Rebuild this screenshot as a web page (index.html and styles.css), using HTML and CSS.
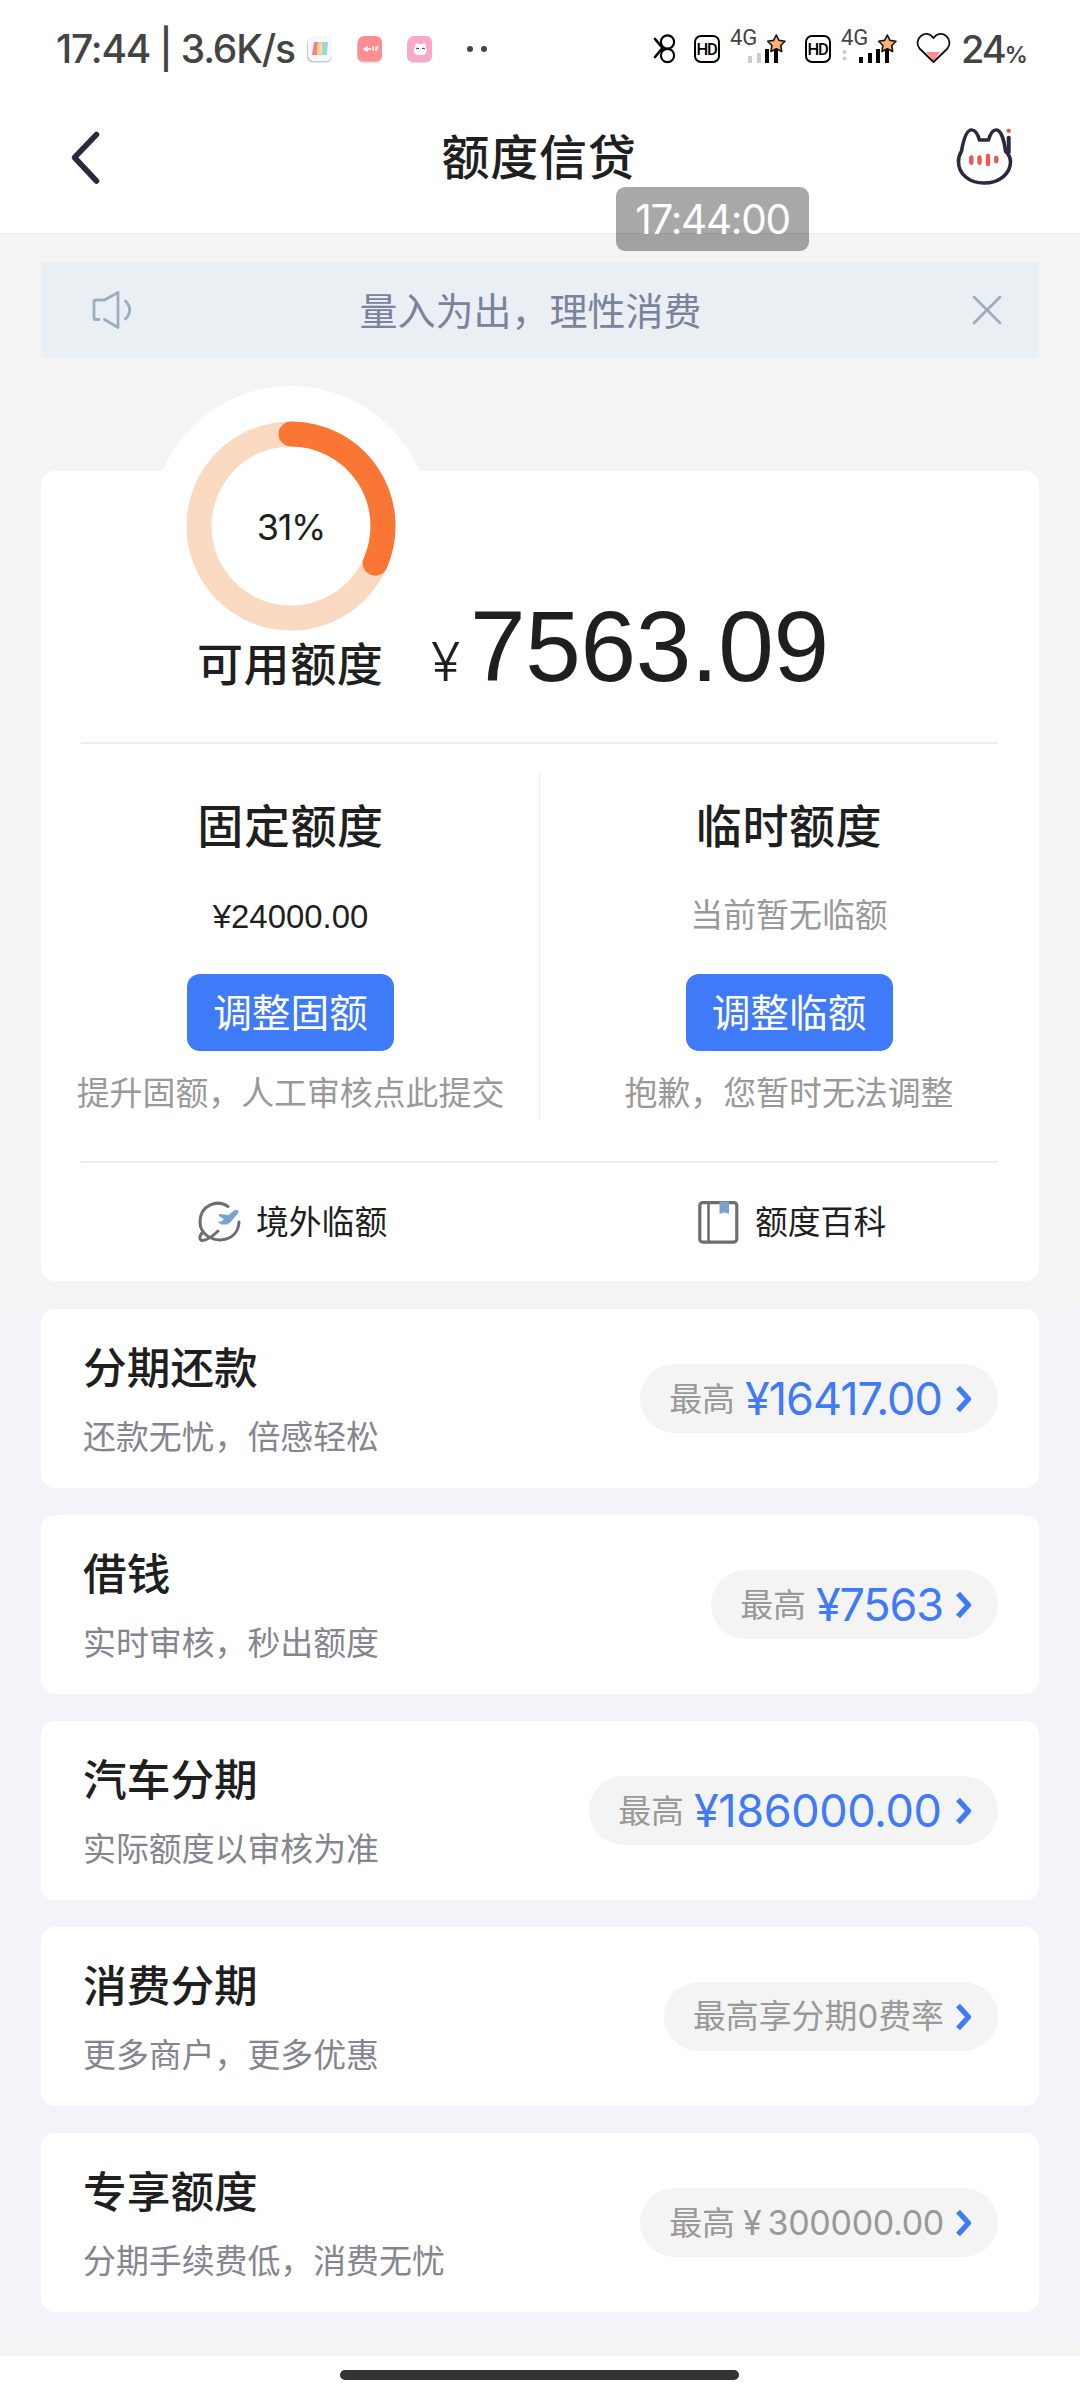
FILE: index.html
```html
<!DOCTYPE html>
<html lang="zh-CN">
<head>
<meta charset="utf-8">
<title>额度信贷</title>
<link rel="stylesheet" href="styles.css">
</head>
<body>
<div class="screen">
  <div class="status">
    <span class="status-time">17:44 | 3.6K/s</span>
    <svg class="status-apps" width="190" height="36" viewBox="302 33 190 36">
      <rect x="307" y="39.5" width="25" height="25" rx="6" fill="#c9c9cf"/>
      <rect x="308" y="38" width="24" height="25" rx="6" fill="#f8f8fc"/>
      <path d="M314 44h4l-1 13h-5z" fill="#f38286"/><path d="M318 44h4l-1 6 1 7h-5z" fill="#f8cf88"/><path d="M322 44h6l-1 13h-5z" fill="#97dad3"/>
      <rect x="357" y="39.5" width="25" height="25" rx="6" fill="#dcb9bb"/>
      <rect x="358" y="38" width="24" height="25" rx="6" fill="#ff8d91"/>
      <path d="M364 51l3-2v4zM368 51h3M373 48v5M376 49v4M378 48l-2 5" stroke="#fff" stroke-width="1.4" fill="#fff"/>
      <rect x="407" y="39.5" width="25" height="25" rx="6" fill="#dcbac8"/>
      <rect x="408" y="38" width="24" height="25" rx="6" fill="#ffa6c9"/>
      <path d="M415 48l1-3 3 1h3l3-1 1 3q2 8-3 9h-6q-5-1-2-9z" fill="#fff"/>
      <path d="M416 51l2-1 1 1M422 51l1-1 2 1" fill="none" stroke="#333" stroke-width="1"/>
      <circle cx="470" cy="51" r="3" fill="#444"/><circle cx="484" cy="51" r="3" fill="#444"/>
    </svg>
    <div class="status-right">
      <svg class="bt" width="24" height="34" viewBox="652 34 24 34" fill="none" stroke="#000" stroke-width="2.2" stroke-linecap="round">
        <circle cx="667.500" cy="44" r="6.600"/><circle cx="667.500" cy="57.500" r="6.600"/><path d="M655 41l7.500 9-7.500 9" stroke-width="2.600"/>
      </svg>
      <span class="hd">HD</span>
      <div class="net net-a">
        <span class="net-type">4G</span>
        <svg class="bars" width="58" height="36" viewBox="729 32 58 36">
          <path d="M748 58h4v7h-4zM757 55h4v10h-4z" fill="#ccc"/><path d="M765 51h4v14h-4zM774 51h4v14h-4z"/>
          <path d="M776.300 37l2.700 5.400 6 .9-4.300 4.200 1 6-5.400-2.800-5.400 2.800 1-6-4.300-4.200 6-.9z" fill="#ffb273" stroke="#151515" stroke-width="1.600" stroke-linejoin="round"/>
        </svg>
      </div>
      <span class="hd">HD</span>
      <div class="net net-b">
        <span class="net-type">4G</span>
        <svg class="bars" width="58" height="36" viewBox="840 32 58 36">
          <circle cx="844.500" cy="54" r="2" fill="#ccc"/><circle cx="844.500" cy="60.500" r="2" fill="#ccc"/>
          <path d="M859 59h4v6h-4zM868 55h4v10h-4zM876 51h4v14h-4zM885 51h4v14h-4z"/>
          <path d="M887.300 37l2.700 5.400 6 .9-4.300 4.200 1 6-5.400-2.800-5.400 2.800 1-6-4.300-4.200 6-.9z" fill="#ffb273" stroke="#151515" stroke-width="1.600" stroke-linejoin="round"/>
        </svg>
      </div>
      <svg class="heart" width="38" height="34" viewBox="914 33 38 34">
        <path d="M926 54h14l-6.500 9.500z" fill="#ff8d91"/>
        <path d="M933.500 64L919.500 50.500c-7-9 6-21 14-10.500 8-10.500 21 1.500 14 10.500z" fill="none" stroke="#111" stroke-width="1.800" stroke-linejoin="round"/>
      </svg>
      <span class="battery">24<span class="percent">%</span></span>
    </div>
  </div>

  <header class="header">
    <svg class="back" width="32" height="56" viewBox="70 133 32 56" fill="none" stroke="#2b2a3d" stroke-width="5.500" stroke-linecap="round" stroke-linejoin="round"><path d="M96.500 138.500L74.500 161.500 96.500 185"/></svg>
    <h1 class="title">额度信贷</h1>
    <svg class="cat" width="60" height="60" viewBox="954 130 60 62" preserveAspectRatio="none" fill="none" stroke-linecap="round" stroke-linejoin="round">
      <path d="M961.500 156C963 147 966 134 971.500 134c4.500 0 6.500 5 8 10.500h9c1.500-5.500 3.500-10.500 7.500-10.500 5.500 0 8.500 13 9.500 22q5 5 5 11c0 12-11 22-26.500 22s-25.500-10-25.500-22q0-6 3-11z" stroke="#2b2a3d" stroke-width="3.600"/>
      <path d="M1008.700 142v15" stroke="#2b2a3d" stroke-width="4"/>
      <circle cx="1008.700" cy="135" r="2.200" fill="#e8584f"/>
      <path d="M971.300 162.500v5.500M979.500 162.500v5.500M988 161v8.500M996.300 163v3.500" stroke="#e8584f" stroke-width="4.400"/>
    </svg>
    <div class="toast">17:44:00</div>
  </header>

  <main class="content">
    <div class="notice">
      <svg width="42" height="42" viewBox="0 0 42 42" fill="none" stroke="#9aaec1" stroke-width="2.800" stroke-linecap="round" stroke-linejoin="round">
        <path d="M7 30.500H3.500q-1.500 0-1.500-1.500V13q0-2 2-2h8.500L26 3.500v35L12.500 30.500M33.500 12q8.500 9 0 18"/>
      </svg>
      <p class="notice-text">量入为出，理性消费</p>
      <svg width="34" height="34" viewBox="0 0 34 34" fill="none" stroke="#9aaec1" stroke-width="2.800" stroke-linecap="round"><path d="M4 4l26 26M30 4L4 30"/></svg>
    </div>

    <section class="quota">
      <div class="dial">
        <svg class="ring" width="210" height="210" viewBox="0 0 210 210" fill="none" stroke-width="25">
          <circle cx="105" cy="105" r="92" stroke="#fad9c1"/>
          <path d="M105 13A92 92 0 0 1 189.200 142.100" stroke="#f97634" stroke-linecap="round"/>
        </svg>
        <span class="dial-value">31%</span>
      </div>
      <div class="available">
        <span class="available-label">可用额度</span>
        <span class="available-sign">¥</span>
        <span class="available-amount">7563.09</span>
      </div>
      <div class="limits">
        <div class="limit">
          <h2 class="limit-title">固定额度</h2>
          <p class="limit-amount">¥24000.00</p>
          <button class="adjust">调整固额</button>
          <p class="limit-tip">提升固额，人工审核点此提交</p>
        </div>
        <div class="limit">
          <h2 class="limit-title">临时额度</h2>
          <p class="limit-none">当前暂无临额</p>
          <button class="adjust">调整临额</button>
          <p class="limit-tip">抱歉，您暂时无法调整</p>
        </div>
      </div>
      <div class="links">
        <div class="link">
          <svg width="46" height="46" viewBox="0 0 46 46" fill="none" stroke="#6e6e6e" stroke-width="3" stroke-linecap="round" stroke-linejoin="round">
            <path d="M32 7.500C21 0 4 6 4 23c0 5 2 9 5 12 9 10 33 8 34-12M22 32q-10 10-16.500 9.500-4-2 1.500-9"/>
            <path d="M41.500 11.500q-2-1-4 1l-5 4-9-1v1.500l5 3-3 3h-3l3 2h6q4-3 6-6l4-5q1-1.500 0-2.500z" fill="#7aa2d0" stroke="#7aa2d0" stroke-width="1"/>
          </svg>
          <span>境外临额</span>
        </div>
        <div class="link">
          <svg width="46" height="46" viewBox="0 0 46 46" fill="none" stroke="#6e6e6e" stroke-width="3.200">
            <rect x="4.800" y="3.600" width="37" height="39.500" rx="3"/><path d="M13.500 4v39" stroke-width="2.600"/>
            <path d="M24.500 2.500h9.500V15l-4.700-1.500L24.500 15z" fill="#7aa2d0" stroke="none"/>
          </svg>
          <span>额度百科</span>
        </div>
      </div>
    </section>
  </main>

  <section class="products">
    <article class="product">
      <div><h3 class="product-title">分期还款</h3><p class="product-desc">还款无忧，倍感轻松</p></div>
      <div class="pill"><span>最高</span><strong class="pill-amount a1">¥16417.00</strong><svg class="arrow" width="20" height="32" viewBox="0 0 20 32"><path d="M4 4.500L14.500 16 4 27.500"/></svg></div>
    </article>
    <article class="product">
      <div><h3 class="product-title">借钱</h3><p class="product-desc">实时审核，秒出额度</p></div>
      <div class="pill"><span>最高</span><strong class="pill-amount a2">¥7563</strong><svg class="arrow" width="20" height="32" viewBox="0 0 20 32"><path d="M4 4.500L14.500 16 4 27.500"/></svg></div>
    </article>
    <article class="product">
      <div><h3 class="product-title">汽车分期</h3><p class="product-desc">实际额度以审核为准</p></div>
      <div class="pill"><span>最高</span><strong class="pill-amount a3">¥186000.00</strong><svg class="arrow" width="20" height="32" viewBox="0 0 20 32"><path d="M4 4.500L14.500 16 4 27.500"/></svg></div>
    </article>
    <article class="product">
      <div><h3 class="product-title">消费分期</h3><p class="product-desc">更多商户，更多优惠</p></div>
      <div class="pill"><span>最高享分期<span class="zero">0</span>费率</span><svg class="arrow" width="20" height="32" viewBox="0 0 20 32"><path d="M4 4.500L14.500 16 4 27.500"/></svg></div>
    </article>
    <article class="product">
      <div><h3 class="product-title">专享额度</h3><p class="product-desc">分期手续费低，消费无忧</p></div>
      <div class="pill"><span>最高</span><span class="pill-plain"><span>¥</span><span>300000.00</span></span><svg class="arrow" width="20" height="32" viewBox="0 0 20 32"><path d="M4 4.500L14.500 16 4 27.500"/></svg></div>
    </article>
  </section>

  <footer class="home"><div class="home-bar"></div></footer>
</div>
</body>
</html>
```

FILE: styles.css
```css
* { box-sizing: border-box; margin: 0; padding: 0; }
body { background: #f4f4f4; font-family: "Noto Sans CJK SC", sans-serif; color: #1f1f1f; }
svg { display: block; flex: none; }
.screen { width: 1080px; height: 2400px; display: flex; flex-direction: column; overflow: hidden; }

.status { height: 100px; flex: none; background: #fff; display: flex; padding: 28px 55px 0 56px; color: #444; font-family: Inter, sans-serif; white-space: nowrap; }
.status-time { width: 246px; font-size: 39px; font-weight: 500; line-height: 41px; letter-spacing: -1.2px; }
.status-apps { margin-top: 3px; }
.status-right { display: flex; flex: 1; justify-content: flex-end; align-items: flex-start; }
.bt { margin-top: 4px; margin-right: 18px; }
.hd { width: 26px; height: 28px; margin-top: 7px; border: 2px solid #000; border-radius: 7px; color: #000; font: 500 16.5px/25px Roboto, sans-serif; text-align: center; letter-spacing: -1.2px; text-indent: -1px; }
.net { position: relative; width: 58px; margin-left: 9px; }
.net-a { margin-right: 18px; }
.net-b { margin-right: 16px; }
.net-type { position: absolute; left: 1px; top: -2px; font: 400 22px/24px Roboto, sans-serif; }
.bars { margin-top: 2px; }
.heart { margin-top: 3px; margin-right: 9px; }
.battery { font-size: 38px; line-height: 42px; font-weight: 500; width: 64px; letter-spacing: -2px; }
.percent { font-size: 23px; font-weight: 600; }

.header { height: 133px; flex: none; background: #fff; position: relative; display: flex; justify-content: space-between; padding: 0 66px 0 70px; box-shadow: 0 1px 0 #eaeaea; z-index: 1; }
.back { margin-top: 29px; }
.title { font-size: 48px; font-weight: 500; line-height: 72px; margin: 18px 0 0 22px; letter-spacing: 0.8px; }
.cat { margin-top: 26px; }
.toast { position: absolute; left: 616px; top: 87px; width: 193px; height: 64px; border-radius: 9px; background: rgba(0, 0, 0, 0.34); color: #fff; font: 400 40.5px/65px Inter, sans-serif; text-align: center; letter-spacing: -1.3px; }

.content { padding: 29px 41px 28px; flex: none; }
.notice { height: 96px; background: #eaeff4; display: flex; align-items: center; justify-content: space-between; padding: 0 35px 0 51px; }
.notice-text { font-size: 38px; line-height: 56px; color: #79839d; margin: -3px 43px 0 0; }

.quota { position: relative; margin-top: 113px; height: 810px; background: #fff; border-radius: 14px; padding: 0 41px 0 40px; }
.dial { position: absolute; left: 110px; top: -85px; width: 280px; height: 280px; border-radius: 50%; background: #fff; display: grid; place-items: center; }
.ring { grid-area: 1 / 1; }
.dial-value { grid-area: 1 / 1; font: 400 36px/44px Inter, sans-serif; letter-spacing: -1.3px; padding-top: 2px; }
.available { position: relative; height: 273px; border-bottom: 2px solid #eee; display: flex; align-items: baseline; padding: 125px 0 0 116px; white-space: nowrap; }
.available-label { font-size: 46px; font-weight: 500; line-height: 66px; width: 234px; letter-spacing: 0.6px; }
.available-sign { font-size: 54px; font-weight: 300; line-height: 66px; width: 39px; font-family: Inter, sans-serif; }
.available-amount { font: 400 100px/100px "Liberation Sans", sans-serif; letter-spacing: -0.4px; }

.limits { height: 419px; border-bottom: 2px solid #eee; display: grid; grid-template-columns: 459px 1fr; padding: 28px 0 41px; }
.limit { display: flex; flex-direction: column; align-items: center; white-space: nowrap; }
.limit:first-child { border-right: 1px solid #eee; padding-right: 39px; }
.limit:last-child { padding-left: 40px; }
.limit-title { font-size: 46px; font-weight: 500; line-height: 66px; margin-top: 18px; letter-spacing: 0.6px; }
.limit-amount, .limit-none { height: 48px; font-size: 32.9px; margin-top: 33px; }
.limit-amount { font-family: "Liberation Sans", sans-serif; line-height: 55px; }
.limit-none { color: #999; line-height: 48px; }
.adjust { width: 207px; height: 77px; flex: none; margin-top: 37px; padding-bottom: 5px; border: 0; border-radius: 13px; background: #3f7bf8; color: #fff; font: 400 38.7px/72px "Noto Sans CJK SC", sans-serif; }
.limit-tip { color: #999; font-size: 32.9px; line-height: 48px; margin-top: 16px; }
.links { height: 118px; display: grid; grid-template-columns: 499px 1fr; padding-left: 115px; }
.link { display: flex; align-items: center; gap: 14px; font-size: 32.8px; line-height: 48px; white-space: nowrap; }
.link span { margin-top: -5px; }

.products { height: 1030px; flex: none; background: #f2f4f9; padding: 0 41px; display: flex; flex-direction: column; gap: 27px; }
.product { height: 179px; background: #fff; border-radius: 14px; display: flex; align-items: center; justify-content: space-between; padding: 0 41px 0 42px; }
.product-title { font-size: 43.7px; font-weight: 500; line-height: 64px; margin-top: -6px; }
.product-desc { font-size: 32.9px; line-height: 48px; color: #85858f; margin-top: 14px; }
.pill { height: 69px; border-radius: 35px; background: #f4f4f4; display: flex; align-items: center; padding: 0 24px 0 29px; font-size: 32.9px; line-height: 64px; color: #999; white-space: nowrap; }
.pill > span:first-child { margin-top: -4px; }
.pill-amount { font: 400 45px/69px Inter, sans-serif; color: #3f7bf8; margin-left: 10px; }
.a1 { width: 199px; letter-spacing: -1px; }
.a2 { width: 128px; letter-spacing: -1.2px; }
.a3 { width: 250px; letter-spacing: -0.4px; }
.zero { font-family: Inter, sans-serif; font-size: 33px; }
.pill-plain { font: 400 34px/69px Inter, sans-serif; letter-spacing: -0.3px; margin-left: 8px; width: 201px; display: flex; justify-content: space-between; }
.arrow { margin-left: 10px; fill: none; stroke: #3f7bf8; stroke-width: 5.4; stroke-linejoin: round; }

.home { margin-top: 17px; flex: 1; background: #fff; padding-top: 14px; }
.home-bar { width: 399px; height: 10px; border-radius: 5px; background: #333; margin-left: 340px; }
```
